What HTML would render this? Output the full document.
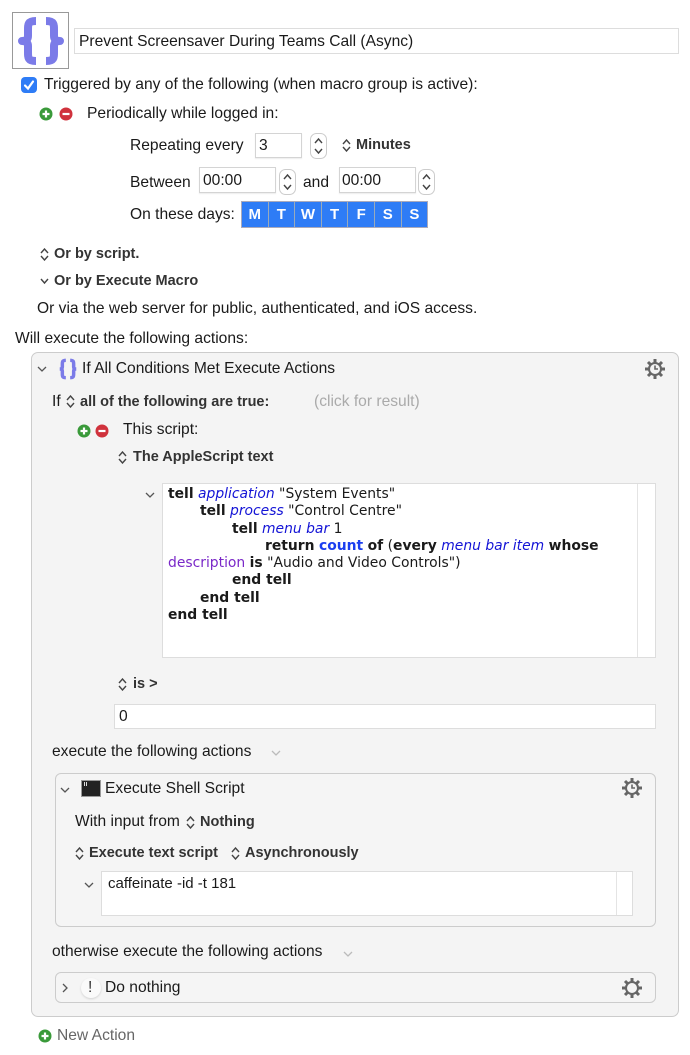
<!DOCTYPE html>
<html><head><meta charset="utf-8"><style>
body{margin:0;width:690px;height:1055px;background:#fff;position:relative;overflow:hidden;font-family:"Liberation Sans",Arial,sans-serif;font-size:15.6px;color:#1a1a1a}
.t{position:absolute;white-space:nowrap;line-height:18px}
.b{font-weight:bold;color:#333;font-size:14.5px}
.box{position:absolute;box-sizing:border-box}
.inp{position:absolute;box-sizing:border-box;background:#fff;border:1px solid #d4d4d4;box-shadow:0 1px 1px rgba(0,0,0,.08)}
.code{font-family:"DejaVu Sans",Verdana,sans-serif;font-size:13.9px;line-height:17.3px}
.code b{font-weight:bold}
.kw{color:#1414d6;font-style:italic}
.bl{color:#1a3ef0;font-weight:bold}
.pu{color:#7a28c8}
svg{position:absolute}
.days{position:absolute;left:241px;top:201px;display:flex;border:1px solid #aab}
.days div{width:25.6px;height:25px;background:#2e7cf6;color:#fff;font-weight:bold;font-size:15px;text-align:center;line-height:25px;border-right:1px solid #9ab}
.days div:last-child{border-right:none}
</style></head><body>

<div class="box" style="left:12px;top:12px;width:57px;height:57px;border:1px solid #999;background:#fff"></div>
<svg style="left:18px;top:17px" width="46" height="48" viewBox="0 0 46 48"><g fill="none" stroke="#7b7be8" stroke-width="8" stroke-linejoin="round"><path d="M18 4 C10 4 10 7 10 13 V19 Q10 24 4 24 Q10 24 10 29 V35 C10 41 10 44 18 44"/><path d="M28 4 C36 4 36 7 36 13 V19 Q36 24 42 24 Q36 24 36 29 V35 C36 41 36 44 28 44"/></g></svg>
<div class="inp" style="left:74px;top:28px;width:605px;height:26px;border-color:#ddd;box-shadow:none"></div>
<div class="t" style="left:79px;top:33px">Prevent Screensaver During Teams Call (Async)</div>

<div class="box" style="left:21px;top:77px;width:16px;height:16px;background:#2e7cf6;border-radius:4px"></div>
<svg style="left:21px;top:77px" width="16" height="16"><path d="M4 8.5 L7 11.5 L12 4.5" stroke="#fff" stroke-width="2.2" fill="none" stroke-linecap="round"/></svg>
<div class="t" style="left:44px;top:76px">Triggered by any of the following (when macro group is active):</div>

<svg style="left:39px;top:107px" width="34" height="14"><circle cx="7" cy="7" r="6.5" fill="#3a9a3a"/><path d="M7 3.5v7M3.5 7h7" stroke="#fff" stroke-width="2.2"/><circle cx="27" cy="7" r="6.5" fill="#d0323c"/><path d="M23.5 7h7" stroke="#fff" stroke-width="2.2"/></svg>
<div class="t" style="left:87px;top:105px">Periodically while logged in:</div>

<div class="t" style="left:130px;top:137px">Repeating every</div>
<div class="inp" style="left:255px;top:133px;width:47px;height:25px"></div>
<div class="t" style="left:259px;top:137px">3</div>
<svg style="left:310px;top:133px" width="17" height="26"><rect x=".5" y=".5" width="16" height="25" rx="6" fill="#fff" stroke="#ccc"/><path d="M5 10l3.5-4 3.5 4M5 16l3.5 4 3.5-4" stroke="#444" stroke-width="1.4" fill="none"/></svg>
<svg style="left:342px;top:139px" width="9" height="13"><path d="M1 5l3.5-4 3.5 4M1 8l3.5 4 3.5-4" stroke="#444" stroke-width="1.4" fill="none"/></svg>
<div class="t b" style="left:356px;top:136px">Minutes</div>

<div class="t" style="left:130px;top:174px">Between</div>
<div class="inp" style="left:199px;top:167px;width:77px;height:26px"></div>
<div class="t" style="left:203px;top:172px">00:00</div>
<svg style="left:279px;top:169px" width="17" height="26"><rect x=".5" y=".5" width="16" height="25" rx="6" fill="#fff" stroke="#ccc"/><path d="M5 10l3.5-4 3.5 4M5 16l3.5 4 3.5-4" stroke="#444" stroke-width="1.4" fill="none"/></svg>
<div class="t" style="left:303px;top:174px">and</div>
<div class="inp" style="left:339px;top:167px;width:77px;height:26px"></div>
<div class="t" style="left:342px;top:172px">00:00</div>
<svg style="left:418px;top:169px" width="17" height="26"><rect x=".5" y=".5" width="16" height="25" rx="6" fill="#fff" stroke="#ccc"/><path d="M5 10l3.5-4 3.5 4M5 16l3.5 4 3.5-4" stroke="#444" stroke-width="1.4" fill="none"/></svg>

<div class="t" style="left:130px;top:206px">On these days:</div>
<div class="days"><div>M</div><div>T</div><div>W</div><div>T</div><div>F</div><div>S</div><div>S</div></div>

<svg style="left:40px;top:248px" width="9" height="13"><path d="M1 5l3.5-4 3.5 4M1 8l3.5 4 3.5-4" stroke="#444" stroke-width="1.4" fill="none"/></svg>
<div class="t b" style="left:54px;top:245px">Or by script.</div>
<svg style="left:40px;top:277px" width="9" height="8"><path d="M1 2l3.5 4 3.5-4" stroke="#444" stroke-width="1.4" fill="none"/></svg>
<div class="t b" style="left:54px;top:272px">Or by Execute Macro</div>
<div class="t" style="left:37px;top:300px">Or via the web server for public, authenticated, and iOS access.</div>
<div class="t" style="left:15px;top:330px">Will execute the following actions:</div>

<div class="box" style="left:31px;top:352px;width:648px;height:665px;background:#f4f4f4;border:1px solid #ccc;border-radius:7px"></div>
<svg style="left:37px;top:365px" width="10" height="8"><path d="M1 2l4 4 4-4" stroke="#555" stroke-width="1.3" fill="none"/></svg>
<svg style="left:58px;top:358px" width="20" height="22" viewBox="0 0 46 48"><g fill="none" stroke="#7b7be8" stroke-width="8"><path d="M18 4 C10 4 10 7 10 13 V19 Q10 24 4 24 Q10 24 10 29 V35 C10 41 10 44 18 44"/><path d="M28 4 C36 4 36 7 36 13 V19 Q36 24 42 24 Q36 24 36 29 V35 C36 41 36 44 28 44"/></g></svg>
<div class="t" style="left:82px;top:360px">If All Conditions Met Execute Actions</div>
<svg style="left:644px;top:358px" width="22" height="22" viewBox="0 0 22 22"><g stroke="#666" stroke-width="3"><path d="M11 1v20M1 11h20M4 4l14 14M18 4L4 18"/></g><circle cx="11" cy="11" r="7" fill="#666"/><circle cx="11" cy="11" r="5" fill="#f4f4f4"/><path d="M11 7.5V11h3" stroke="#666" stroke-width="1.6" fill="none"/></svg>

<div class="t" style="left:52px;top:393px">If</div>
<svg style="left:66px;top:395px" width="9" height="13"><path d="M1 5l3.5-4 3.5 4M1 8l3.5 4 3.5-4" stroke="#444" stroke-width="1.4" fill="none"/></svg>
<div class="t b" style="left:80px;top:393px">all of the following are true:</div>
<div class="t" style="left:314px;top:393px;color:#aaa">(click for result)</div>

<svg style="left:77px;top:424px" width="34" height="14"><circle cx="7" cy="7" r="6.5" fill="#3a9a3a"/><path d="M7 3.5v7M3.5 7h7" stroke="#fff" stroke-width="2.2"/><circle cx="25" cy="7" r="6.5" fill="#d0323c"/><path d="M21.5 7h7" stroke="#fff" stroke-width="2.2"/></svg>
<div class="t" style="left:123px;top:421px">This script:</div>
<svg style="left:118px;top:451px" width="9" height="13"><path d="M1 5l3.5-4 3.5 4M1 8l3.5 4 3.5-4" stroke="#444" stroke-width="1.4" fill="none"/></svg>
<div class="t b" style="left:133px;top:448px">The AppleScript text</div>

<svg style="left:145px;top:491px" width="10" height="8"><path d="M1 2l4 4 4-4" stroke="#555" stroke-width="1.3" fill="none"/></svg>
<div class="box" style="left:162px;top:483px;width:494px;height:175px;background:#fff;border:1px solid #ddd"></div>
<div class="box" style="left:637px;top:484px;width:1px;height:173px;background:#e4e4e4"></div>
<div class="t code" style="left:168px;top:486px">
<b>tell</b> <span class="kw">application</span> "System Events"<br>
<span style="padding-left:32px"></span><b>tell</b> <span class="kw">process</span> "Control Centre"<br>
<span style="padding-left:64px"></span><b>tell</b> <span class="kw">menu bar</span> 1<br>
<span style="padding-left:97px"></span><b>return</b> <span class="bl">count</span> <b>of</b> (<b>every</b> <span class="kw">menu bar item</span> <b>whose</b><br>
<span class="pu">description</span> <b>is</b> "Audio and Video Controls")<br>
<span style="padding-left:64px"></span><b>end tell</b><br>
<span style="padding-left:32px"></span><b>end tell</b><br>
<b>end tell</b></div>

<svg style="left:118px;top:678px" width="9" height="13"><path d="M1 5l3.5-4 3.5 4M1 8l3.5 4 3.5-4" stroke="#444" stroke-width="1.4" fill="none"/></svg>
<div class="t b" style="left:133px;top:675px">is &gt;</div>
<div class="inp" style="left:114px;top:704px;width:542px;height:25px;border-color:#ddd;box-shadow:none"></div>
<div class="t" style="left:119px;top:708px">0</div>

<div class="t" style="left:52px;top:743px">execute the following actions</div>
<svg style="left:271px;top:749px" width="10" height="8"><path d="M1 2l4 4 4-4" stroke="#bbb" stroke-width="1.3" fill="none"/></svg>

<div class="box" style="left:55px;top:773px;width:601px;height:154px;background:#f5f5f5;border:1px solid #ccc;border-radius:6px"></div>
<svg style="left:60px;top:786px" width="10" height="8"><path d="M1 2l4 4 4-4" stroke="#555" stroke-width="1.3" fill="none"/></svg>
<div class="box" style="left:81px;top:780px;width:20px;height:17px;background:#222;border:1px solid #999"></div>
<div class="box" style="left:84px;top:782px;width:1px;height:4px;background:#ddd"></div>
<div class="box" style="left:86px;top:782px;width:1px;height:4px;background:#ddd"></div>
<div class="t" style="left:105px;top:780px">Execute Shell Script</div>
<svg style="left:621px;top:777px" width="22" height="22" viewBox="0 0 22 22"><g stroke="#666" stroke-width="3"><path d="M11 1v20M1 11h20M4 4l14 14M18 4L4 18"/></g><circle cx="11" cy="11" r="7" fill="#666"/><circle cx="11" cy="11" r="5" fill="#f5f5f5"/><path d="M11 7.5V11h3" stroke="#666" stroke-width="1.6" fill="none"/></svg>

<div class="t" style="left:75px;top:813px">With input from</div>
<svg style="left:186px;top:816px" width="9" height="13"><path d="M1 5l3.5-4 3.5 4M1 8l3.5 4 3.5-4" stroke="#444" stroke-width="1.4" fill="none"/></svg>
<div class="t b" style="left:200px;top:813px">Nothing</div>
<svg style="left:75px;top:847px" width="9" height="13"><path d="M1 5l3.5-4 3.5 4M1 8l3.5 4 3.5-4" stroke="#444" stroke-width="1.4" fill="none"/></svg>
<div class="t b" style="left:89px;top:844px">Execute text script</div>
<svg style="left:231px;top:847px" width="9" height="13"><path d="M1 5l3.5-4 3.5 4M1 8l3.5 4 3.5-4" stroke="#444" stroke-width="1.4" fill="none"/></svg>
<div class="t b" style="left:245px;top:844px">Asynchronously</div>

<svg style="left:84px;top:881px" width="10" height="8"><path d="M1 2l4 4 4-4" stroke="#555" stroke-width="1.3" fill="none"/></svg>
<div class="box" style="left:101px;top:871px;width:532px;height:45px;background:#fff;border:1px solid #ddd"></div>
<div class="box" style="left:616px;top:872px;width:1px;height:43px;background:#e4e4e4"></div>
<div class="t" style="left:108px;top:875px;font-size:15px">caffeinate -id -t 181</div>

<div class="t" style="left:52px;top:943px">otherwise execute the following actions</div>
<svg style="left:343px;top:950px" width="10" height="8"><path d="M1 2l4 4 4-4" stroke="#bbb" stroke-width="1.3" fill="none"/></svg>

<div class="box" style="left:55px;top:972px;width:601px;height:31px;background:#f5f5f5;border:1px solid #ccc;border-radius:6px"></div>
<svg style="left:61px;top:983px" width="8" height="10"><path d="M2 1l4 4-4 4" stroke="#555" stroke-width="1.3" fill="none"/></svg>
<div class="box" style="left:81px;top:978px;width:20px;height:20px;border-radius:50%;background:#fafafa;box-shadow:0 1px 2px rgba(0,0,0,.15)"></div>
<div class="t" style="left:88px;top:979px;color:#333">!</div>
<div class="t" style="left:105px;top:979px">Do nothing</div>
<svg style="left:621px;top:977px" width="22" height="22" viewBox="0 0 22 22"><g stroke="#666" stroke-width="3"><path d="M11 1v20M1 11h20M4 4l14 14M18 4L4 18"/></g><circle cx="11" cy="11" r="7" fill="#666"/><circle cx="11" cy="11" r="5" fill="#f5f5f5"/></svg>

<svg style="left:38px;top:1029px" width="14" height="14"><circle cx="7" cy="7" r="6.5" fill="#3a9a3a"/><path d="M7 3.5v7M3.5 7h7" stroke="#fff" stroke-width="2.2"/></svg>
<div class="t" style="left:57px;top:1027px;color:#666">New Action</div>
</body></html>
